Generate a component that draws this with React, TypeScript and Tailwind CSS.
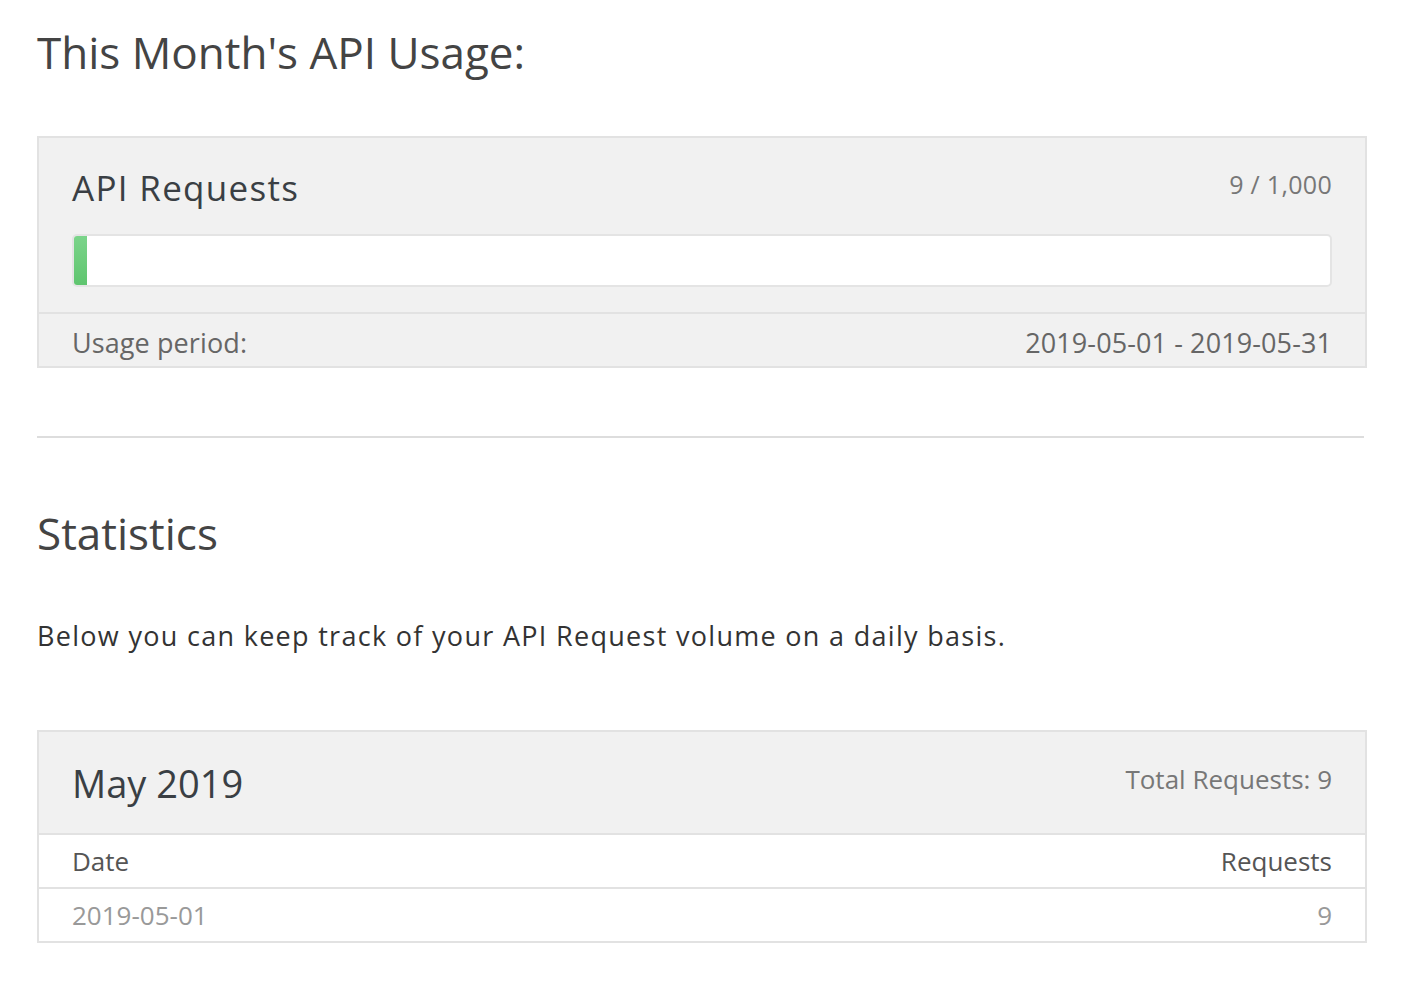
import React from "react";

export default function App() {
  return (
    <div className="min-h-screen bg-white px-[37px] pt-[24px] text-[#333]" style={{ fontFamily: '"Open Sans", sans-serif' }}>
      <div className="w-[1330px]">
        <h1 className="text-[44px] leading-[56px] text-[#444] font-normal">This Month's API Usage:</h1>

        <div className="mt-[56px] border-2 border-[#e2e2e2] bg-[#f1f1f1]">
          <div className="px-[33px] pt-[26px] pb-[25px]">
            <div className="flex items-start justify-between">
              <div className="text-[35px] leading-[48px] tracking-[1.3px] text-[#3a3f44]">API Requests</div>
              <div className="text-[25px] leading-[40px] tracking-[0.3px] text-[#777]">9 / 1,000</div>
            </div>
            <div className="mt-[22px] h-[53px] rounded-[5px] border-2 border-[#e4e4e4] bg-white overflow-hidden flex">
              <div className="h-full w-[13px] bg-gradient-to-b from-[#7bd48a] to-[#5fc56f]"></div>
            </div>
          </div>
          <div className="border-t-2 border-[#e2e2e2] px-[33px] h-[54px] pt-[6px] flex items-center justify-between text-[27px] tracking-[0.1px] text-[#666]">
            <span>Usage period:</span>
            <span>2019-05-01 - 2019-05-31</span>
          </div>
        </div>

        <hr className="mt-[68px] border-0 border-t-2 border-[#ddd] w-[1327px]" />

        <h2 className="mt-[67px] text-[44px] leading-[56px] text-[#444] font-normal">Statistics</h2>

        <p className="mt-[57px] text-[27px] leading-[36px] tracking-[1.3px] text-[#333]">Below you can keep track of your API Request volume on a daily basis.</p>

        <div className="mt-[76px] border-2 border-[#e2e2e2]">
          <div className="bg-[#f1f1f1] px-[33px] h-[101px] flex items-center justify-between">
            <div className="text-[38px] leading-[52px] text-[#3a3f44]">May 2019</div>
            <div className="text-[26px] text-[#777] self-start pt-[28px]">Total Requests: 9</div>
          </div>
          <div className="border-t-2 border-[#e2e2e2] px-[33px] h-[54px] flex items-center justify-between text-[26px] text-[#555]">
            <span>Date</span>
            <span>Requests</span>
          </div>
          <div className="border-t-2 border-[#e2e2e2] px-[33px] h-[54px] flex items-center justify-between text-[26px] text-[#999]">
            <span>2019-05-01</span>
            <span>9</span>
          </div>
        </div>
      </div>
    </div>
  );
}
